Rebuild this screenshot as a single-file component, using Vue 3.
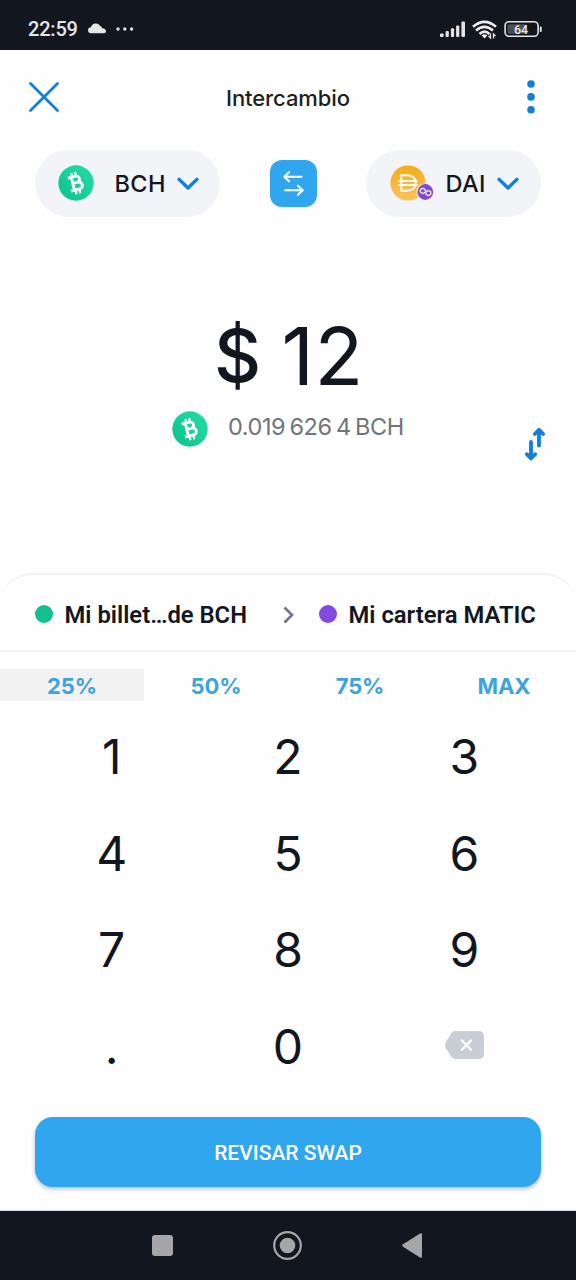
<script setup>
const keys = ['1', '2', '3', '4', '5', '6', '7', '8', '9', '.', '0', 'del']
const shares = ['25%', '50%', '75%', 'MAX']
</script>

<template>
  <div class="screen">
    <header class="status">
      <span class="clock">22:59</span>
      <svg class="cloud" width="18" height="11" viewBox="0 0 18 11">
        <path d="M3 10.200A2.900 2.900 0 0 1 3 4.300 5 5 0 0 1 12 2.700 4 4 0 0 1 14.200 5.200C16.800 5.200 18 7 18 8.300c0 1.200-.9 1.900-2 1.900Z" fill="#e6e6e8" />
      </svg>
      <svg class="more" width="18" height="4" viewBox="0 0 18 4" fill="#e2e2e4">
        <circle cx="2" cy="2" r="1.700" /><circle cx="8.800" cy="2" r="1.700" /><circle cx="15.600" cy="2" r="1.700" />
      </svg>
      <svg class="signal" width="104" height="22" viewBox="0 0 104 22">
        <g fill="#e4e4e6">
          <rect x="1" y="13.500" width="3.600" height="3.500" rx="1" />
          <rect x="6.600" y="11" width="3.200" height="6" rx="1" />
          <rect x="11.900" y="8.300" width="3.200" height="8.700" rx="1" />
          <rect x="17.100" y="5.600" width="3.200" height="11.400" rx="1" />
          <rect x="22.400" y="1.500" width="3.600" height="15.500" rx="1" />
        </g>
        <g fill="none" stroke="#ececee" stroke-width="2.600">
          <path d="M34 6.800Q45.500-3.200 57 6.800" />
          <path d="M37 10.500Q45.500 3.100 54 10.500" />
          <path d="M40.500 13.900Q45.500 9.500 50.500 13.900" />
        </g>
        <path d="M42.600 15.500Q45.500 13 48.400 15.500L45.500 18.600Z" fill="#ececee" />
        <path d="M51.500 13.500v4.500l-2-2M54.500 18.500v-4.500l2 2" fill="none" stroke="#ececee" stroke-width="1.300" />
        <rect x="66.100" y="1.700" width="33" height="14.600" rx="4" fill="none" stroke="#e4e4e6" stroke-width="1.600" />
        <rect x="68.500" y="4.300" width="19" height="9.500" rx="1.500" fill="#4c4e53" />
        <rect x="100.800" y="6.500" width="1.900" height="5.500" rx=".8" fill="#e4e4e6" />
        <text x="82" y="13.500" text-anchor="middle" class="level">64</text>
      </svg>
    </header>

    <nav class="top">
      <svg class="close" width="32" height="32" viewBox="0 0 32 32">
        <path d="M2.500 2.500 29.500 29.500M29.500 2.500 2.500 29.500" stroke="#137fda" stroke-width="2.800" stroke-linecap="round" />
      </svg>
      <h1>Intercambio</h1>
      <svg class="menu" width="8" height="34" viewBox="0 0 8 34" fill="#137fda">
        <circle cx="4" cy="4" r="3.800" /><circle cx="4" cy="16.900" r="3.800" /><circle cx="4" cy="29.700" r="3.800" />
      </svg>
    </nav>

    <section class="pair">
      <div class="chip from">
        <svg class="coin" width="36" height="36" viewBox="0 0 36 36">
          <defs>
            <linearGradient id="bch" x1="0" y1="1" x2="1" y2="0">
              <stop offset="0" stop-color="#0ac18e" /><stop offset="1" stop-color="#27dda6" />
            </linearGradient>
            <g id="bitcoin-cash">
              <circle cx="18" cy="18" r="17.700" fill="url(#bch)" />
              <g transform="rotate(-14 18 18)" fill="none" stroke="#fff">
                <path d="M14.800 11.300V24.700M11.200 11.300H19.300a3.100 3.100 0 0 1 0 6.300H15M19.300 17.600h.8a3.550 3.550 0 0 1 0 7.100H11.200" stroke-width="2.900" />
                <path d="M15.800 7.200v4M19.700 7.200v4M15.800 25v4M19.700 25v4" stroke-width="2.200" />
              </g>
            </g>
          </defs>
          <use href="#bitcoin-cash" />
        </svg>
        <span class="ticker">BCH</span>
        <svg class="chev" width="22" height="14" viewBox="0 0 22 14"><path d="M2 2.300 11 11 20 2.300" /></svg>
      </div>
      <div class="flip">
        <svg width="47" height="47" viewBox="0 0 47 47" fill="none" stroke="#fff" stroke-width="2.100" stroke-linecap="round" stroke-linejoin="round">
          <path d="M31.500 16.800H14.500M19 12.300l-4.700 4.500L19 21.300M15 30.200H32.500M28 25.700l4.700 4.500L28 34.700" />
        </svg>
      </div>
      <div class="chip to">
        <svg class="coin" width="45" height="38" viewBox="0 0 45 38">
          <defs>
            <linearGradient id="dai" x1="0" y1="0" x2="0" y2="1">
              <stop offset="0" stop-color="#f5ac1d" /><stop offset="1" stop-color="#fac35b" />
            </linearGradient>
          </defs>
          <circle cx="18" cy="18" r="17.600" fill="url(#dai)" />
          <path d="M11.300 10.200H17.500C28.500 10.200 28.500 25.800 17.500 25.800H11.300ZM8.500 15.900H27.500M8.500 20H27.500" fill="none" stroke="#fff" stroke-width="1.900" />
          <circle cx="35.300" cy="27" r="8.800" fill="#fff" />
          <circle cx="35.300" cy="27" r="7.900" fill="#8247d6" />
          <path d="M35.200 27.200 32.800 28.600 30.300 27.200V24.600L32.800 23.200 35.200 24.600 36.100 29.300 38.400 30.800 40.800 29.300V26.800L38.400 25.400 35.300 27.200" fill="none" stroke="#fff" stroke-width="1.200" stroke-linejoin="round" />
        </svg>
        <span class="ticker">DAI</span>
        <svg class="chev" width="22" height="14" viewBox="0 0 22 14"><path d="M2 2.300 11 11 20 2.300" /></svg>
      </div>
    </section>

    <section class="amount">
      <div class="fiat"><span class="sign">$</span><span class="number">12</span></div>
      <div class="crypto">
        <svg class="coin" width="36" height="36" viewBox="0 0 36 36"><use href="#bitcoin-cash" /></svg>
        <span class="value">0.019 626 4 BCH</span>
        <svg class="invert" width="24" height="36" viewBox="0 0 24 36" fill="none" stroke="#137fda" stroke-width="3.800" stroke-linecap="round" stroke-linejoin="round">
          <path d="M15 19.500V4M10.800 8 15 3.800 19.200 8M7 16V31.500M2.800 28.200 7 32.400 11.200 28.200" />
        </svg>
      </div>
    </section>

    <section class="sheet">
      <div class="wallets">
        <i class="dot green"></i>
        <b class="source">Mi billet…de BCH</b>
        <svg class="arrow" width="14" height="20" viewBox="0 0 14 20"><path d="M2.500 2.500 10 10 2.500 17.500" fill="none" stroke="#717784" stroke-width="2.700" /></svg>
        <i class="dot purple"></i>
        <b class="target">Mi cartera MATIC</b>
      </div>
      <div class="shares">
        <span v-for="(s, i) in shares" :key="s" :class="{ on: i === 0 }">{{ s }}</span>
      </div>
      <div class="pad">
        <div v-for="k in keys" :key="k" class="key">
          <svg v-if="k === 'del'" width="39" height="28" viewBox="0 0 39 28">
            <path d="M10.500 0H33.500Q39 0 39 5.500V22.500Q39 28 33.500 28H10.500Q8 28 6.500 26L1 17.500Q-.9 14 1 10.500L6.500 2Q8 0 10.500 0Z" fill="#c9cdd6" />
            <path d="M16.800 9.500 26 18.700M26 9.500 16.800 18.700" stroke="#fff" stroke-width="2.200" stroke-linecap="round" />
          </svg>
          <template v-else>{{ k }}</template>
        </div>
      </div>
      <button class="review"><span>REVISAR SWAP</span></button>
    </section>

    <footer class="system">
      <svg width="576" height="69" viewBox="0 0 576 69" fill="#a4a6aa">
        <rect x="152" y="24" width="21" height="21" rx="3" />
        <circle cx="287.500" cy="34.500" r="13.300" fill="none" stroke="#a4a6aa" stroke-width="2.200" />
        <circle cx="287.500" cy="34.500" r="7.800" />
        <path d="M403 33.200 420 22.500Q422 21.500 422 23.500V45.500Q422 47.500 420 46.500L403 35.800Q401.500 34.500 403 33.200Z" />
      </svg>
    </footer>
  </div>
</template>

<style>
body { margin: 0; background: #fefefe; }
</style>

<style scoped>
.screen { width: 576px; height: 1280px; display: flex; flex-direction: column; background: #fefefe; color: #12161f; font-family: Inter, "Liberation Sans", sans-serif; overflow: hidden; white-space: nowrap; }
.screen * { box-sizing: border-box; }
svg { display: block; flex: none; }
.status { height: 50px; flex: none; background: #12161f; display: flex; align-items: flex-start; }
.clock { width: 50px; margin: 16px 0 0 28px; font: 500 20px/26px Roboto, sans-serif; color: #e6e6e8; letter-spacing: -.2px; }
.cloud { margin: 23px 0 0 10px; }
.more { margin: 27px 0 0 10px; }
.signal { margin: 20px 0 0 305px; }
.level { font: 500 12.500px Roboto, sans-serif; fill: #e8e8ea; }
.top { height: 100px; flex: none; display: flex; padding-left: 28px; }
.close { margin-top: 31px; }
h1 { width: 456px; margin: 34px 0 0; font-size: 22px; line-height: 28px; font-weight: 500; text-align: center; color: #1d1e20; letter-spacing: -.1px; }
.menu { margin: 30px 0 0 10.500px; }
.pair { height: 67px; flex: none; display: flex; justify-content: space-between; align-items: center; padding: 0 35px; }
.chip { height: 67px; border-radius: 34px; background: #f3f4f8; display: flex; align-items: center; }
.from { width: 185px; padding-left: 23px; }
.to { width: 175px; padding-left: 23.500px; }
.from .coin { margin-top: -2px; }
.ticker { font-size: 23.500px; font-weight: 500; line-height: 30px; letter-spacing: .4px; }
.from .ticker { width: 62.500px; margin-left: 20.500px; }
.to .ticker { width: 51.500px; margin-left: 11px; }
.chev path { fill: none; stroke: #137fda; stroke-width: 3.300; stroke-linecap: round; stroke-linejoin: round; }
.flip { width: 47px; height: 47px; margin-left: 1px; border-radius: 12px; background: #30a6ee; }
.amount { height: 356px; flex: none; padding-top: 89px; }
.fiat { height: 100px; display: flex; padding-left: 214px; font-size: 80px; line-height: 100px; }
.sign { width: 67.500px; font-size: 73px; font-weight: 450; }
.number { letter-spacing: .5px; }
.crypto { display: flex; margin-top: 4px; padding-left: 171.500px; }
.crypto .coin { margin-top: .5px; }
.value { width: 317px; margin: 2px 0 0 20.500px; font-size: 23.500px; line-height: 30px; color: #717479; letter-spacing: -.45px; word-spacing: -1.800px; }
.invert { margin: 15.500px 0 0 -21px; }
.sheet { height: 638px; flex: none; border-top: 2px solid #f3f3f5; border-radius: 32px 32px 0 0; border-bottom: 1px solid #d5d8dc; }
.wallets { height: 77px; padding-left: 35px; display: flex; align-items: center; border-bottom: 2px solid #f3f3f5; font: 600 23.800px/30px Roboto, sans-serif; }
.wallets b { font-weight: 600; margin-top: 4px; }
.dot { width: 18px; height: 18px; border-radius: 50%; margin-top: 2px; flex: none; }
.green { background: #12bf8e; }
.purple { background: #824adf; }
.source { width: 205px; margin-left: 11.500px; }
.arrow { margin: 5px 0 0 12px; }
.purple { margin-left: 23.500px; }
.target { margin-left: 11.500px; }
.shares { display: grid; grid-template-columns: repeat(4, 144px); margin-top: 17px; }
.shares span { height: 32px; font-size: 22px; font-weight: 700; line-height: 35px; text-align: center; color: #3da3de; letter-spacing: -.1px; }
.shares .on { background: #f2f2f2; }
.pad { display: grid; grid-template: repeat(4, 96.500px) / repeat(3, 176.300px); justify-content: center; margin-top: 8px; }
.key { display: flex; justify-content: center; align-items: center; font-size: 48px; line-height: 60px; }
.key svg { margin: -3px 0 0 1px; }
.review { display: block; width: 506px; height: 70px; margin: 22px 0 0 35px; padding: 2px 0 0; border: 0; border-radius: 18px; background: #30a6ee; box-shadow: 0 2px 4px rgba(20, 40, 60, .3); color: #fff; font: 500 21px/28px Roboto, sans-serif; }
.system { height: 69px; flex: none; background: #12161f; }
</style>
